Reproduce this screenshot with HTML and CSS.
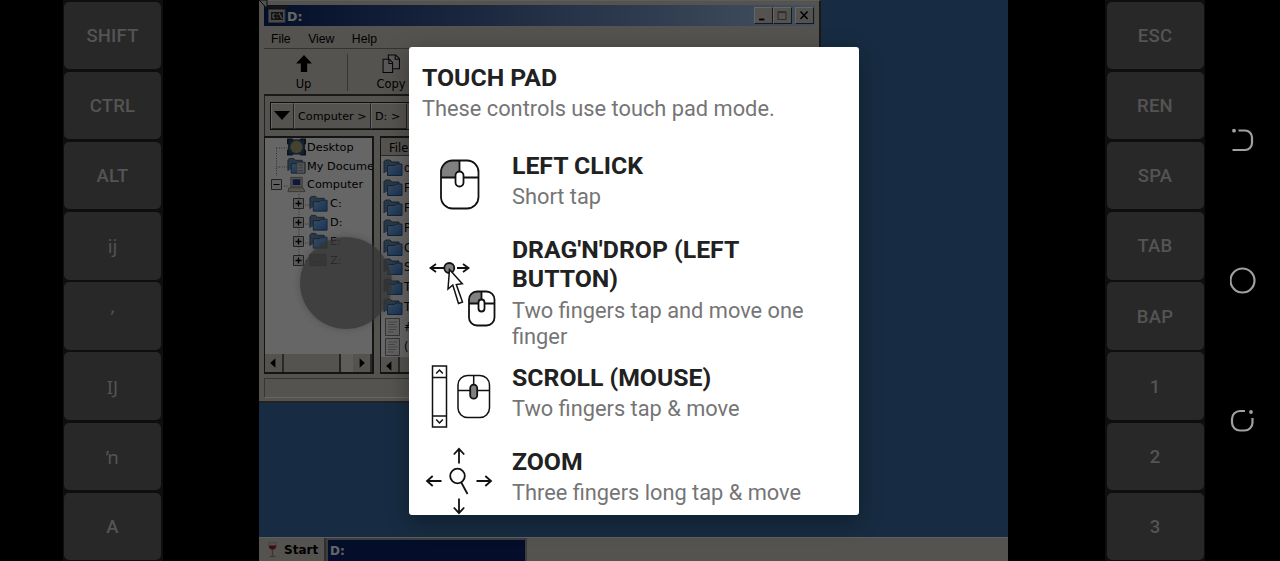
FILE: index.html
```html
<!DOCTYPE html>
<html lang="en">
<head>
<meta charset="utf-8">
<title>Touch pad controls</title>
<link rel="stylesheet" href="styles.css">
</head>
<body>
<svg class="defs" aria-hidden="true">
  <defs>
    <linearGradient id="blue" x1="0" y1="0" x2="1" y2="1"><stop offset="0" stop-color="#8cc0f0"/><stop offset="1" stop-color="#3f80d4"/></linearGradient>
    <symbol id="folder" viewBox="0 0 20 18"><path d="M1 14V2.500L2.500 1H7l2 2h7v4" fill="#6d8caf" stroke="#3c5a7c"/><path d="M4.500 16.500V6.500h7L13 5h6v11.500z" fill="url(#blue)" stroke="#2c5b96"/></symbol>
    <symbol id="page" viewBox="0 0 20 18"><path d="M2.500.500h14v17h-14z" fill="#f4f4f4" stroke="#858585"/><path d="M5 4h9M5 6.500h7M5 9h9M5 11.500h8M5 14h6" stroke="#b0b0b0"/></symbol>
    <symbol id="plus" viewBox="0 0 11 11"><path d="M.5.5h10v10H.5z" fill="#e2e2dc" stroke="#555"/><path d="M2.500 5.500h6M5.500 2.500v6" stroke="#000" stroke-width="1.300"/></symbol>
  </defs>
</svg>
<div class="screen">
  <div class="keys keys-left">
    <div class="key">SHIFT</div><div class="key">CTRL</div><div class="key">ALT</div>
    <div class="key thin">ĳ</div><div class="key thin">ʹ</div><div class="key thin">Ĳ</div><div class="key thin">ŉ</div>
    <div class="key">A</div>
  </div>

  <main class="desktop">
    <section class="window">
      <header class="titlebar">
        <svg class="app-icon" viewBox="0 0 18 14"><path d="M.5.5h16.500v13H.5z" fill="#bbb" stroke="#777"/><path d="M3 3h12v8H3z" fill="#333"/><path d="M7 5H5v4h2M9 5v1M9 8v1M11 4l3 6" stroke="#eee" fill="none"/></svg>
        <span class="caption">D:</span>
        <div class="buttons">
          <svg viewBox="0 0 18 17"><path d="M4 13h6" stroke="#000" stroke-width="2"/></svg>
          <svg viewBox="0 0 18 17"><path d="M4 5h9v8H4z" fill="none" stroke="#777" stroke-width="1.300"/><path d="M4 4.500h9" stroke="#777" stroke-width="2"/></svg>
          <svg class="close" viewBox="0 0 18 17"><path d="M4.500 4l8 8.500M12.500 4l-8 8.500" stroke="#000" stroke-width="1.700"/></svg>
        </div>
      </header>
      <nav class="menu"><span>File</span><span>View</span><span>Help</span></nav>
      <div class="toolbar">
        <div class="tool up"><svg viewBox="0 0 18 18"><path d="M9 1l7.500 8H12v8H6V9H1.500z"/></svg><span>Up</span></div>
        <div class="tool copy"><svg viewBox="0 0 18 18"><path d="M6.500 1h7l3.500 3.500V14H6.500z" fill="#ddd" stroke="#111"/><path d="M1.500 5h6l3 3v9.500h-9z" fill="#ddd" stroke="#111"/><path d="M13 1v4h4M7 5v4h3.500" fill="none" stroke="#111"/></svg><span>Copy</span></div>
      </div>
      <div class="pathbar">
        <div class="path">
          <div class="crumb drop"><svg viewBox="0 0 16 9"><path d="M0 0h16L8 9z"/></svg></div>
          <div class="crumb comp">Computer &gt;</div>
          <div class="crumb drive">D: &gt;</div>
        </div>
      </div>
      <div class="panes">
        <div class="pane tree">
          <div class="tree-body">
            <svg class="branches" viewBox="0 0 108 132"><path d="M11.500 10v28M11.500 10h12M11.500 29h12M19 48h5M34 56v68M40 67h8M40 86h8M40 105h8M40 123h8" fill="none" stroke="#777" stroke-dasharray="1 1.500"/></svg>
            <div class="node top"><svg viewBox="0 0 20 18"><path d="M1 1h18v16H1z" fill="#365477"/><path d="M1 6V1h5M14 1h5v5M1 12v5h5M14 17h5v-5" fill="none" stroke="#18334f" stroke-width="2"/><circle cx="10" cy="9" r="6.500" fill="#a8a878"/></svg>Desktop</div>
            <div class="node top"><svg viewBox="0 0 20 18"><use href="#folder"/><path d="M10.500 5.500h8v11h-8z" fill="#ddd" stroke="#888"/><path d="M12 8h5M12 11h5M12 14h5" stroke="#779"/></svg>My Docume</div>
            <div class="node root"><svg class="toggle" viewBox="0 0 11 11"><path d="M.5.5h10v10H.5z" fill="#eee" stroke="#555"/><path d="M2.500 5.500h6" stroke="#000"/></svg><svg viewBox="0 0 20 18"><path d="M4 1h12v10H4z" fill="#d0cdb8" stroke="#888"/><path d="M6 3h8v6H6z" fill="#203c98"/><path d="M2 12h15l2 4H1z" fill="#dad7c2" stroke="#888"/></svg>Computer</div>
            <div class="node child"><svg class="toggle"><use href="#plus"/></svg><svg><use href="#folder"/></svg>C:</div>
            <div class="node child"><svg class="toggle"><use href="#plus"/></svg><svg><use href="#folder"/></svg>D:</div>
            <div class="node child"><svg class="toggle"><use href="#plus"/></svg><svg><use href="#folder"/></svg>E:</div>
            <div class="node child"><svg class="toggle"><use href="#plus"/></svg><svg viewBox="0 0 20 18"><path d="M1 3h17v12H1z" fill="#999" stroke="#666"/><path d="M3 11h13" stroke="#555"/></svg>Z:</div>
          </div>
          <div class="scrollbar"><svg viewBox="0 0 18 18"><path d="M11 4v10L5.500 9z"/></svg><i class="thumb"></i><i class="track"></i><svg viewBox="0 0 18 18"><path d="M7 4v10l5.500-5z"/></svg></div>
        </div>
        <div class="pane list">
          <div class="list-head">File</div>
          <div class="list-body">
            <div class="file"><svg><use href="#folder"/></svg>d</div>
            <div class="file"><svg><use href="#folder"/></svg>F</div>
            <div class="file"><svg><use href="#folder"/></svg>F</div>
            <div class="file"><svg><use href="#folder"/></svg>P</div>
            <div class="file"><svg><use href="#folder"/></svg>C</div>
            <div class="file"><svg><use href="#folder"/></svg>S</div>
            <div class="file"><svg><use href="#folder"/></svg>T</div>
            <div class="file"><svg><use href="#folder"/></svg>T</div>
            <div class="file"><svg><use href="#page"/></svg>#</div>
            <div class="file"><svg><use href="#page"/></svg>(</div>
          </div>
          <div class="scrollbar"><svg viewBox="0 0 18 18"><path d="M11 4v10L5.500 9z"/></svg><i class="thumb wide"></i></div>
        </div>
      </div>
      <div class="status"></div>
    </section>
    <svg class="cursor" viewBox="0 0 32 11"><path d="M9 5.500h20v3H9z" fill="#333"/><path d="M0 0h8v8L5.500 6 3 3z" fill="#ccc" stroke="#222"/></svg>
    <footer class="taskbar">
      <div class="start"><svg viewBox="0 0 12 18"><path d="M2 1h8c1 5-1 8-4 8S1 6 2 1z" fill="#ccc" stroke="#888" stroke-width=".6"/><path d="M2 4h8c0 3-2 4.500-4 4.500S2 7 2 4z" fill="#a2162b"/><path d="M6 9v6M3 16h6" stroke="#888" stroke-width="1.300"/></svg>Start</div>
      <div class="task">D:</div>
    </footer>
    <div class="scrim"></div>
    <div class="touch"></div>
  </main>

  <div class="keys keys-right">
    <div class="key">ESC</div><div class="key">REN</div><div class="key">SPA</div><div class="key">TAB</div>
    <div class="key">BAP</div><div class="key">1</div><div class="key">2</div><div class="key">3</div>
  </div>
  <nav class="system">
    <svg viewBox="0 0 30 30"><path d="M8.500 4.500H15a7 7 0 0 1 7 7v5.500a7 7 0 0 1-7 7H2.500"/><circle cx="4" cy="4.700" r="1.900"/></svg>
    <svg viewBox="0 0 30 30"><circle class="ring" cx="12.500" cy="14.500" r="12"/></svg>
    <svg viewBox="0 0 30 30"><path d="M15 5h-5a8 8 0 0 0-8 8v3.500a8 8 0 0 0 8 8h4.500a8 8 0 0 0 8-8V12"/><circle cx="21" cy="6" r="1.900"/></svg>
  </nav>

  <div class="dialog">
    <div class="intro"><h2>TOUCH PAD</h2><p>These controls use touch pad mode.</p></div>
    <div class="control">
      <svg viewBox="422 150 90 84"><path class="shade" d="M459.500 160.500H453a12 12 0 0 0-12 12v5h18.500z"/><rect x="441" y="160.500" width="37.500" height="48" rx="11.500"/><path d="M459.500 160.500v11M441 177.500h14.500M463.500 177.500h15"/><rect class="white" x="455.500" y="171.500" width="8" height="15" rx="4"/></svg>
      <div><h2>LEFT CLICK</h2><p>Short tap</p></div>
    </div>
    <div class="control tall">
      <svg viewBox="422 234 90 128"><path d="M444 268h-13m5-4-5.500 4 5.500 4M457 268h11m-5-4 5.500 4-5.500 4"/><circle class="shade outline" cx="449.300" cy="268" r="5"/><path class="white" stroke-width="1.500" d="M449.500 269.500 448 289l4.800-4 5.700 18.500 4-1.500-6.200-17.500 6-.8z"/><path class="shade" d="M481.500 291.500H477a8 8 0 0 0-8 8v4h12.500z"/><rect x="469" y="291.500" width="25.500" height="34" rx="8"/><path d="M481.500 291.500v8M469 303.500h9.500M484.500 303.500h10"/><rect class="white" x="478.500" y="299.500" width="6" height="12" rx="3"/></svg>
      <div><h2>DRAG'N'DROP (LEFT<br>BUTTON)</h2><p>Two fingers tap and move one<br>finger</p></div>
    </div>
    <div class="control">
      <svg viewBox="422 362 90 84"><path stroke-width="1.500" d="M432.500 366h14v61h-14zM432.500 377.500h14M432.500 416h14M436.200 373.500l3.300-3.500 3.300 3.500M436.200 419.500l3.300 3.500 3.300-3.500"/><rect x="458" y="375.500" width="31.500" height="42" rx="9.500" stroke-width="1.500"/><path stroke-width="1.500" d="M473.700 375.500v9M458 390.500h12M477.500 390.500h12"/><rect class="shade outline" x="470.200" y="384.700" width="7" height="14" rx="3.500"/></svg>
      <div><h2>SCROLL (MOUSE)</h2><p>Two fingers tap &amp; move</p></div>
    </div>
    <div class="control">
      <svg viewBox="422 446 90 84"><path d="M459 463.500v-14.500m-5.200 5.500 5.200-5.700 5.200 5.700M459 498.500V513m-5.200-5.500 5.200 5.700 5.200-5.700M441.500 481H427m5.700-5-5.700 5 5.700 5M476.500 481H491m-5.700-5 5.700 5-5.700 5"/><circle cx="457.500" cy="476" r="7.300"/><path d="m461.300 482.500 6.200 11.500"/></svg>
      <div><h2>ZOOM</h2><p>Three fingers long tap &amp; move</p></div>
    </div>
  </div>
</div>
</body>
</html>
```
FILE: styles.css
```css
* { box-sizing: border-box; }
body { margin: 0; background: #000; font-family: Roboto, sans-serif; overflow: hidden; }
svg { display: block; flex: none; }
.defs { position: absolute; width: 0; height: 0; }
.screen { position: relative; display: flex; width: 1280px; height: 561px; background: #000; overflow: hidden; }

.keys { flex: none; width: 100px; height: 561px; padding: 2px 1.5px 0; background: #0e0e0e; display: flex; flex-direction: column; gap: 2.8px; }
.keys-left { margin-left: 62.500px; margin-right: 96.500px; }
.keys-right { margin-left: 97px; }
.key { flex: none; height: 67.300px; padding-top: 1px; border-radius: 5px; background: #282828; color: #545454; display: flex; align-items: center; justify-content: center; font-size: 18.500px; font-weight: 500; letter-spacing: .2px; }
.thin { padding-top: 0; font-family: "Noto Sans", sans-serif; font-weight: 400; font-size: 18.500px; }

.desktop { position: relative; flex: none; width: 749px; height: 561px; background: #3a6ea5; display: flex; flex-direction: column; justify-content: space-between; overflow: hidden; font: 11.500px "DejaVu Sans", sans-serif; color: #000; }
.window { width: 562px; height: 403px; padding: 4px 4px 0 5px; background: #d4d0c8; border-right: 2px solid #404040; border-bottom: 2px solid #555; border-top: 1px solid #e8e8e8; display: flex; flex-direction: column; }
.titlebar { flex: none; height: 21px; display: flex; align-items: center; padding: 0 1px 0 4px; background: linear-gradient(90deg, #0a246a, #a6caf0); }
.app-icon { width: 18px; height: 14px; }
.caption { margin-left: 1px; padding-top: 1px; color: #fff; font-weight: bold; font-size: 12.500px; }
.buttons { margin-left: auto; display: flex; }
.buttons svg { width: 19px; height: 17px; background: #d4d0c8; border: 1px solid; border-color: #fff #404040 #404040 #fff; }
.buttons .close { margin-left: 3px; }
.menu { flex: none; height: 23px; padding: 4px 0 0 7px; display: flex; align-items: center; gap: 17.500px; font-family: "Liberation Sans", sans-serif; font-size: 12.200px; border-bottom: 1px solid #808080; }
.toolbar { flex: none; height: 45px; display: flex; padding-top: 5px; }
.tool { display: flex; flex-direction: column; align-items: center; gap: 4px; }
.tool svg { width: 20px; height: 19px; }
.up { width: 84px; height: 37px; padding-right: 4px; border-right: 1px solid #888; }
.copy { width: 86px; }
.pathbar { flex: none; height: 42px; padding: 6px 0 0 5px; border-top: 2px solid #404040; border-left: 1px solid #555; }
.path { display: flex; height: 28px; border: 1px solid #222; }
.crumb { display: flex; align-items: center; padding: 1px 0 0 3px; border: 1px solid; border-color: #fff #555 #555 #fff; white-space: nowrap; font-size: 11.200px; }
.drop { width: 23px; padding: 0 0 2px 2px; }
.drop svg { width: 16px; height: 9px; }
.comp { width: 77px; }
.drive { width: 36px; padding-left: 3px; }
.panes { flex: none; height: 238px; display: flex; gap: 6px; }
.pane { border: 2px solid #333; border-left-width: 1px; background: #fff; display: flex; flex-direction: column; overflow: hidden; }
.tree { width: 110px; }
.list { flex: 1; }
.tree-body { position: relative; flex: 1; }
.branches { position: absolute; width: 108px; height: 132px; }
.node { position: relative; height: 18.800px; display: flex; align-items: center; gap: 1px; white-space: nowrap; font-size: 11.300px; }
.node svg { width: 19px; height: 18px; }
.node .toggle { width: 11px; height: 11px; }
.top { padding-left: 22px; }
.root { padding-left: 6px; gap: 1px; }
.root .toggle { margin-right: 4px; }
.child { padding-left: 28px; gap: 2px; }
.child .toggle { margin-right: 3px; }
.list-head { height: 19px; padding: 3px 0 0 8px; background: #d4d0c8; border-bottom: 1px solid #666; }
.list-body { flex: 1; padding-top: 2px; }
.file { height: 19.900px; display: flex; align-items: center; padding-left: 2px; gap: 1px; }
.file svg { width: 20px; height: 18px; }
.scrollbar { height: 18px; background: #ebe8e2; display: flex; }
.scrollbar svg { width: 19px; height: 18px; background: #d4d0c8; border-right: 2px solid #666; }
.thumb { width: 57px; background: #d4d0c8; border-right: 2px solid #555; }
.wide { width: 300px; }
.track { flex: 1; }
.status { margin-top: 4px; height: 20px; border: 1px solid; border-color: #888 #fff #fff #888; }
.cursor { position: absolute; left: 0; top: 0; width: 32px; height: 11px; }
.taskbar { height: 24px; display: flex; align-items: stretch; background: #d4d0c8; border-top: 1px solid #eee; }
.start { width: 67px; padding: 1px 0 0 8px; display: flex; align-items: center; gap: 6px; font-weight: bold; font-size: 12px; border-right: 2px solid #777; }
.start svg { width: 11px; height: 18px; }
.task { width: 201px; padding: 0 0 0 2px; background: #0a246a; color: #fff; font-weight: bold; font-size: 12px; border: 2px solid #999; border-bottom: 0; display: flex; align-items: center; }
.scrim { position: absolute; inset: 0; background: rgba(0, 0, 0, .6); }
.touch { position: absolute; left: 41px; top: 237px; width: 92px; height: 92px; border-radius: 50%; background: rgba(54, 54, 54, .78); box-shadow: 0 0 5px 2px rgba(70, 70, 70, .35); }

.system { flex: none; margin-left: 25px; width: 30px; height: 561px; display: flex; flex-direction: column; padding-top: 126px; gap: 110px; }
.system svg { width: 30px; height: 30px; fill: none; stroke: #a0a0a0; stroke-width: 2.200; }
.system circle { fill: #a0a0a0; stroke: none; }
.system .ring { fill: none; stroke: #a0a0a0; }

.dialog { position: absolute; left: 409px; top: 47px; width: 449.500px; height: 467.500px; padding: 15.500px 13px 0; border-radius: 3px; background: #fff; overflow: hidden; box-shadow: 0 6px 22px rgba(0, 0, 0, .35); }
.dialog h2 { margin: 0; font-size: 24.800px; line-height: 29.500px; font-weight: 700; color: #212121; white-space: nowrap; }
.dialog p { margin: 4px 0 0; font-size: 21.800px; line-height: 26px; color: #757575; white-space: nowrap; }
.intro { height: 87.500px; }
.intro p { margin-top: 3.500px; }
.control { display: flex; height: 84px; }
.control > div { padding-top: .6px; }
.tall { height: 128px; }
.control svg { width: 90px; height: 84px; fill: none; stroke: #111; stroke-width: 1.800; }
.tall svg { height: 128px; }
.dialog .shade { fill: #808080; stroke: none; }
.dialog .outline { stroke: #111; }
.dialog .white { fill: #fff; }
```
